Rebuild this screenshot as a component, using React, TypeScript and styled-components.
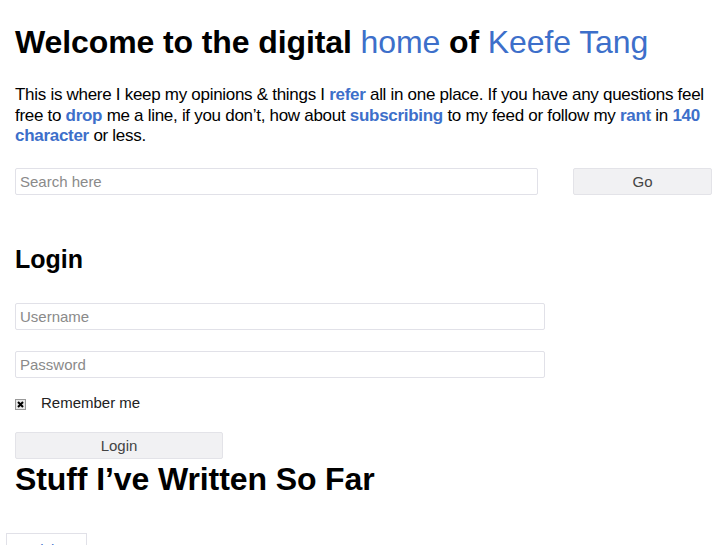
import React from "react";
import styled, { createGlobalStyle } from "styled-components";

const Global = createGlobalStyle`
  html, body { margin: 0; padding: 0; background: #fff; }
  body { font-family: "Liberation Sans", Arial, sans-serif; color: #000; }
`;

const Page = styled.div`
  padding: 0 15px;
  width: 697px;
  overflow: hidden;
  height: 545px;
`;

const Title = styled.h1`
  margin: 22px 0 0;
  font-size: 32px;
  line-height: 40px;
  font-weight: bold;
  letter-spacing: -0.1px;
`;

const Soft = styled.span`
  color: #3d6fca;
  font-weight: normal;
`;

const Intro = styled.p`
  margin: 23px 0 0;
  font-size: 17px;
  line-height: 20.5px;
  letter-spacing: -0.29px;
`;

const Link = styled.a`
  color: #3d6fca;
  font-weight: bold;
  text-decoration: none;
`;

const SearchRow = styled.form`
  display: flex;
  justify-content: space-between;
  margin-top: 21px;
`;

const Field = styled.input<{ $w: number }>`
  box-sizing: border-box;
  width: ${(p) => p.$w}px;
  height: 27px;
  border: 1px solid #e1e1e8;
  border-radius: 2px;
  padding: 0 4px;
  font-family: "Liberation Sans", Arial, sans-serif;
  font-size: 15px;
  color: #333;
  display: block;
  &::placeholder { color: #8a8a8a; }
`;

const Button = styled.button<{ $w: number; $top?: number }>`
  box-sizing: border-box;
  width: ${(p) => p.$w}px;
  height: 27px;
  margin-top: ${(p) => p.$top ?? 0}px;
  border: 1px solid #e3e3e8;
  border-radius: 2px;
  background: #f1f1f3;
  font-family: "Liberation Sans", Arial, sans-serif;
  font-size: 15px;
  color: #444;
`;

const SubTitle = styled.h2`
  margin: 49px 0 0;
  font-size: 25px;
  line-height: 30px;
  font-weight: bold;
`;

const LoginForm = styled.form`
  display: flex;
  flex-direction: column;
  align-items: flex-start;
  margin-top: 29px;
  gap: 21px;
`;

const CheckRow = styled.label`
  display: flex;
  align-items: center;
  gap: 15px;
  font-size: 15px;
  color: #222;
  margin-top: -5px;
  margin-bottom: -4px;
`;

const Box = styled.span`
  width: 11px;
  height: 11px;
  box-sizing: border-box;
  border: 1px solid #999;
  background: #e8e8e8;
  display: inline-flex;
  align-items: center;
  justify-content: center;
  margin-top: 5px;
`;

const Section = styled.h1`
  margin: 2px 0 0;
  font-size: 32px;
  line-height: 36px;
  font-weight: bold;
  letter-spacing: -0.1px;
`;

const Tab = styled.div`
  margin: 36px 0 0 -9px;
  width: 81px;
  height: 20px;
  box-sizing: border-box;
  border: 1px solid #e1e1e8;
  border-bottom: none;
  color: #3d6fca;
  font-size: 15px;
  line-height: 17px;
  padding: 7px 0 0 14px;
`;

export default function App() {
  return (
    <>
      <Global />
      <Page>
        <Title>
          Welcome to the digital <Soft>home</Soft> of <Soft>Keefe Tang</Soft>
        </Title>
        <Intro>
          This is where I keep my opinions &amp; things I <Link href="#">refer</Link> all in one place. If you have any
          questions feel free to <Link href="#">drop</Link> me a line, if you don’t, how about{" "}
          <Link href="#">subscribing</Link> to my feed or follow my <Link href="#">rant</Link> in{" "}
          <Link href="#">140 character</Link> or less.
        </Intro>
        <SearchRow onSubmit={(e) => e.preventDefault()}>
          <Field $w={523} placeholder="Search here" />
          <Button $w={139} type="submit">Go</Button>
        </SearchRow>
        <SubTitle>Login</SubTitle>
        <LoginForm onSubmit={(e) => e.preventDefault()}>
          <Field $w={530} placeholder="Username" />
          <Field $w={530} type="password" placeholder="Password" />
          <CheckRow>
            <Box>
              <svg width="7" height="7" viewBox="0 0 7 7">
                <path d="M1 1L6 6M6 1L1 6" stroke="#000" strokeWidth="2" />
              </svg>
            </Box>
            Remember me
          </CheckRow>
          <Button $w={208} $top={4} type="submit">Login</Button>
        </LoginForm>
        <Section>Stuff I’ve Written So Far</Section>
        <Tab>Articles</Tab>
      </Page>
    </>
  );
}
